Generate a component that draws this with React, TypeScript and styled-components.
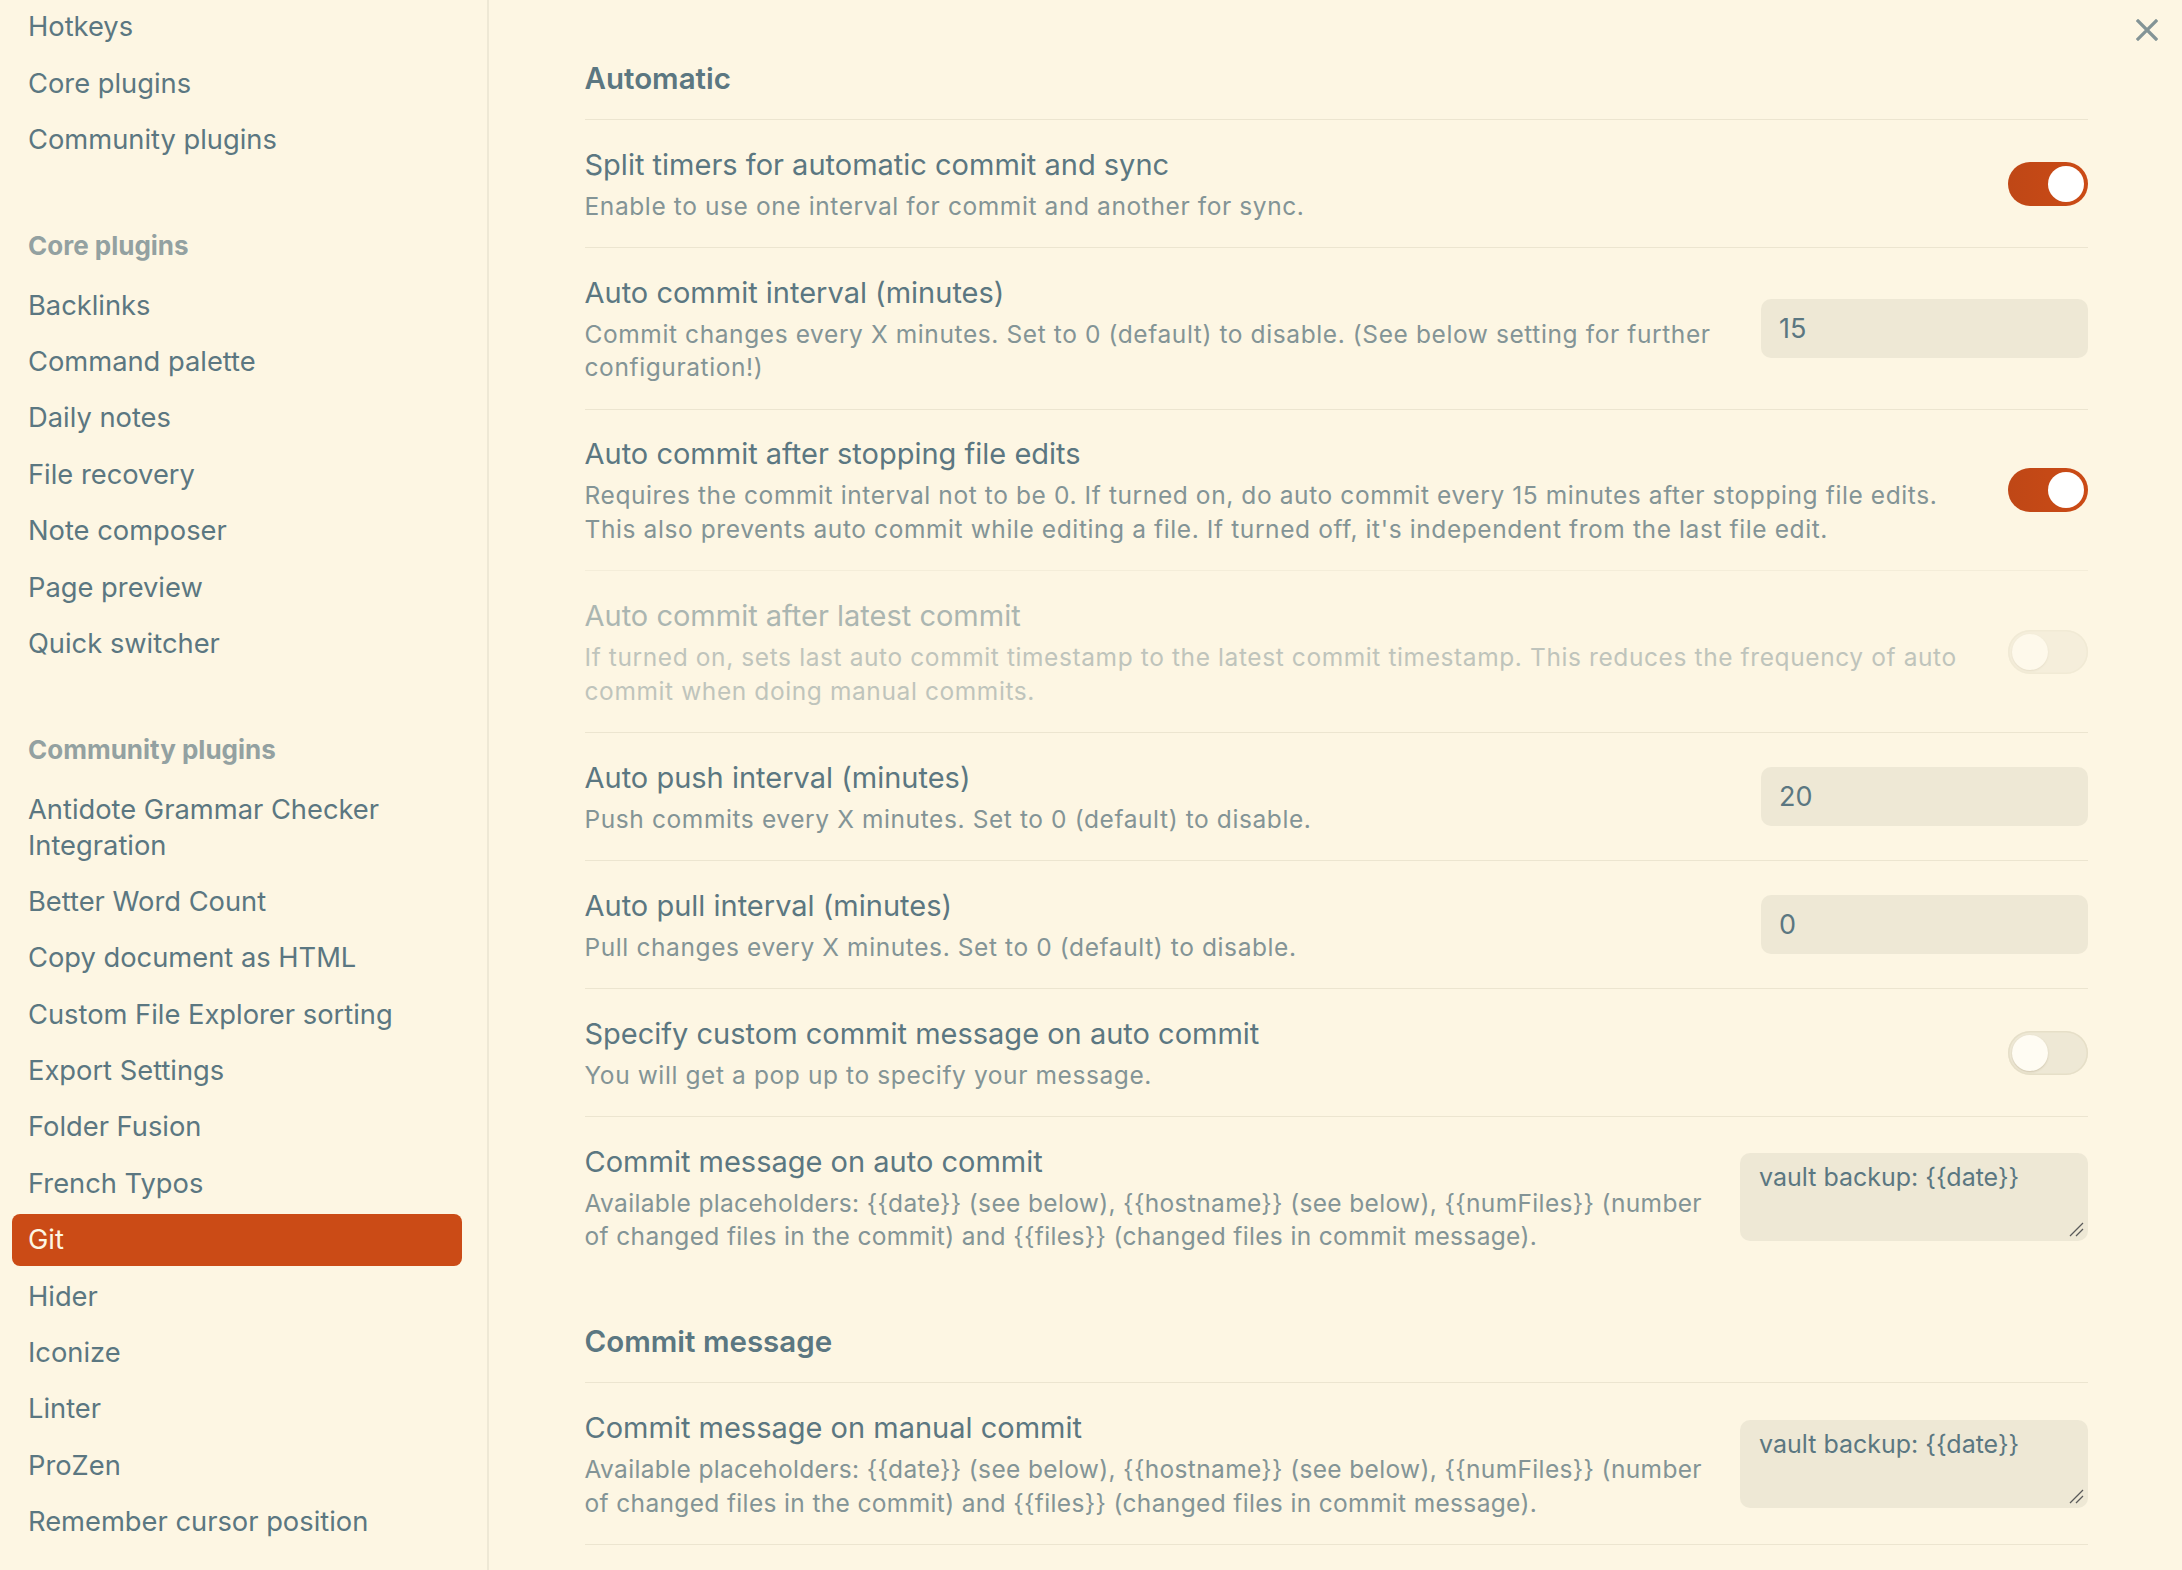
import React from 'react';
import styled, { createGlobalStyle } from 'styled-components';

const GlobalStyle = createGlobalStyle`
  html, body {
    margin: 0;
    padding: 0;
    background: #fdf6e3;
  }
  * {
    box-sizing: border-box;
  }
`;

const C = {
  bg: '#fdf6e3',
  bgAlt: '#eee8d5',
  border: '#ece5d0',
  text: '#5b7781',
  muted: '#839496',
  faint: '#93a1a1',
  accent: '#cb4b16',
};

// 전체 창
const Window = styled.div`
  display: flex;
  width: 100vw;
  height: 100vh;
  overflow: hidden;
  background: ${C.bg};
  font-family: Inter, 'Noto Sans', sans-serif;
  color: ${C.text};
`;

// --- 좌측 탭 목록 ---
const Sidebar = styled.nav`
  width: 489px;
  flex-shrink: 0;
  padding: 1.4px 25px 0 12px;
  border-right: 2px solid ${C.bgAlt};
`;

const NavHeader = styled.div`
  margin-top: 62px;
  padding: 0 16px 15.5px;
  font-size: 26px;
  line-height: 36px;
  font-weight: 700;
  color: ${C.faint};
`;

const NavItem = styled.div<{ $active?: boolean }>`
  padding: 8px 16px;
  margin-bottom: 4.4px;
  border-radius: 8px;
  font-size: 27.3px;
  line-height: 36px;
  background: ${(p) => (p.$active ? C.accent : 'transparent')};
  color: ${(p) => (p.$active ? C.bg : C.text)};
`;

// --- 우측 설정 내용 ---
const Content = styled.main`
  position: relative;
  flex: 1;
  min-width: 0;
  padding: 14.5px 94px 0 95.5px;
`;

const CloseButton = styled.div`
  position: absolute;
  top: 19px;
  right: 24px;
  width: 22px;
  height: 22px;
  color: ${C.muted};
`;

const Heading = styled.div`
  padding: 42.5px 0 20px;
  border-bottom: 1px solid ${C.border};
  font-size: 29.5px;
  line-height: 42px;
  font-weight: 600;
`;

const Item = styled.div<{ $first?: boolean; $last?: boolean; $disabled?: boolean }>`
  display: flex;
  align-items: center;
  padding: 23.8px 0;
  border-top: ${(p) => (p.$first ? 'none' : `1px solid ${C.border}`)};
  border-bottom: ${(p) => (p.$last ? `1px solid ${C.border}` : 'none')};
  opacity: ${(p) => (p.$disabled ? 0.5 : 1)};
`;

const Info = styled.div`
  flex: 1;
  min-width: 0;
  margin-right: 20px;
`;

const Name = styled.div`
  font-size: 29px;
  line-height: 42px;
`;

const Desc = styled.div`
  margin-top: 4px;
  font-size: 24.5px;
  letter-spacing: 0.6px;
  line-height: 33.5px;
  color: ${C.muted};
`;

const DescLine = styled.div<{ $tight?: boolean }>`
  white-space: nowrap;
  letter-spacing: ${(p) => (p.$tight ? '0.35px' : 'inherit')};
`;

const Track = styled.div<{ $on?: boolean }>`
  position: relative;
  width: 80px;
  height: 44px;
  flex-shrink: 0;
  border-radius: 22px;
  background: ${(p) => (p.$on ? 'linear-gradient(90deg, #bf4716, #cb4b16)' : C.bgAlt)};
  box-shadow: ${(p) => (p.$on ? 'none' : 'inset 0 0 0 1.5px #e6dfc8')};
`;

const Knob = styled.div<{ $on?: boolean }>`
  position: absolute;
  top: 4px;
  left: ${(p) => (p.$on ? '40px' : '4px')};
  width: 36px;
  height: 36px;
  border-radius: 50%;
  background: ${(p) => (p.$on ? '#ffffff' : '#fffcf3')};
  box-shadow: ${(p) => (p.$on ? 'none' : '0 1px 2px rgba(120, 100, 60, 0.25)')};
`;

const TextInput = styled.input`
  width: 327px;
  height: 59px;
  flex-shrink: 0;
  padding: 0 18px;
  border: none;
  border-radius: 10px;
  background: ${C.bgAlt};
  font-family: Inter, sans-serif;
  font-size: 27px;
  color: ${C.text};
  outline: none;
`;

const AreaWrap = styled.div`
  position: relative;
  width: 348px;
  height: 88px;
  flex-shrink: 0;
`;

const TextArea = styled.textarea`
  display: block;
  width: 100%;
  height: 100%;
  padding: 7px 19px;
  border: none;
  border-radius: 10px;
  background: ${C.bgAlt};
  font-family: Inter, sans-serif;
  font-size: 25px;
  line-height: 34px;
  color: ${C.text};
  outline: none;
  resize: none;
`;

// 크기 조절 손잡이
const Grip = styled.svg`
  position: absolute;
  right: 4px;
  bottom: 4px;
  pointer-events: none;
`;

const Toggle = ({ on }: { on?: boolean }) => (
  <Track $on={on}>
    <Knob $on={on} />
  </Track>
);

const MessageBox = ({ value }: { value: string }) => (
  <AreaWrap>
    <TextArea defaultValue={value} />
    <Grip width='15' height='15' viewBox='0 0 15 15' fill='none' stroke='#5a5a5a' strokeWidth='1.3'>
      <path d='M1 14L14 1M7 14L14 7' />
    </Grip>
  </AreaWrap>
);

type Setting = {
  name: string;
  desc: string[];
  control: React.ReactNode;
  first?: boolean;
  last?: boolean;
  disabled?: boolean;
  tight?: boolean;
};

const Row = ({ s }: { s: Setting }) => (
  <Item $first={s.first} $last={s.last} $disabled={s.disabled}>
    <Info>
      <Name>{s.name}</Name>
      <Desc>
        {s.desc.map((line, i) => (
          <DescLine key={i} $tight={s.tight}>
            {line}
          </DescLine>
        ))}
      </Desc>
    </Info>
    {s.control}
  </Item>
);

const placeholders = [
  'Available placeholders: {{date}} (see below), {{hostname}} (see below), {{numFiles}} (number',
  'of changed files in the commit) and {{files}} (changed files in commit message).',
];

const automatic: Setting[] = [
  {
    name: 'Split timers for automatic commit and sync',
    desc: ['Enable to use one interval for commit and another for sync.'],
    control: <Toggle on />,
    first: true,
  },
  {
    name: 'Auto commit interval (minutes)',
    desc: [
      'Commit changes every X minutes. Set to 0 (default) to disable. (See below setting for further',
      'configuration!)',
    ],
    control: <TextInput defaultValue='15' />,
  },
  {
    name: 'Auto commit after stopping file edits',
    desc: [
      'Requires the commit interval not to be 0. If turned on, do auto commit every 15 minutes after stopping file edits.',
      "This also prevents auto commit while editing a file. If turned off, it's independent from the last file edit.",
    ],
    control: <Toggle on />,
  },
  {
    name: 'Auto commit after latest commit',
    desc: [
      'If turned on, sets last auto commit timestamp to the latest commit timestamp. This reduces the frequency of auto',
      'commit when doing manual commits.',
    ],
    control: <Toggle />,
    disabled: true,
  },
  {
    name: 'Auto push interval (minutes)',
    desc: ['Push commits every X minutes. Set to 0 (default) to disable.'],
    control: <TextInput defaultValue='20' />,
  },
  {
    name: 'Auto pull interval (minutes)',
    desc: ['Pull changes every X minutes. Set to 0 (default) to disable.'],
    control: <TextInput defaultValue='0' />,
  },
  {
    name: 'Specify custom commit message on auto commit',
    desc: ['You will get a pop up to specify your message.'],
    control: <Toggle />,
  },
  {
    name: 'Commit message on auto commit',
    desc: placeholders,
    control: <MessageBox value='vault backup: {{date}}' />,
    tight: true,
  },
];

const commitMessage: Setting[] = [
  {
    name: 'Commit message on manual commit',
    desc: placeholders,
    control: <MessageBox value='vault backup: {{date}}' />,
    first: true,
    last: true,
    tight: true,
  },
];

const options = ['Hotkeys', 'Core plugins', 'Community plugins'];
const corePlugins = [
  'Backlinks',
  'Command palette',
  'Daily notes',
  'File recovery',
  'Note composer',
  'Page preview',
  'Quick switcher',
];
const communityPlugins = [
  'Antidote Grammar Checker Integration',
  'Better Word Count',
  'Copy document as HTML',
  'Custom File Explorer sorting',
  'Export Settings',
  'Folder Fusion',
  'French Typos',
  'Git',
  'Hider',
  'Iconize',
  'Linter',
  'ProZen',
  'Remember cursor position',
];

export default function App() {
  return (
    <>
      <GlobalStyle />
      <Window>
        <Sidebar>
          {options.map((o) => (
            <NavItem key={o}>{o}</NavItem>
          ))}
          <NavHeader>Core plugins</NavHeader>
          {corePlugins.map((o) => (
            <NavItem key={o}>{o}</NavItem>
          ))}
          <NavHeader>Community plugins</NavHeader>
          {communityPlugins.map((o) => (
            <NavItem key={o} $active={o === 'Git'}>
              {o}
            </NavItem>
          ))}
        </Sidebar>
        <Content>
          <CloseButton>
            <svg width='22' height='22' viewBox='0 0 22 22' fill='none' stroke='currentColor' strokeWidth='3.2' strokeLinecap='square'>
              <path d='M2 2L20 20M20 2L2 20' />
            </svg>
          </CloseButton>
          <Heading>Automatic</Heading>
          {automatic.map((s) => (
            <Row key={s.name} s={s} />
          ))}
          <Heading>Commit message</Heading>
          {commitMessage.map((s) => (
            <Row key={s.name} s={s} />
          ))}
        </Content>
      </Window>
    </>
  );
}
